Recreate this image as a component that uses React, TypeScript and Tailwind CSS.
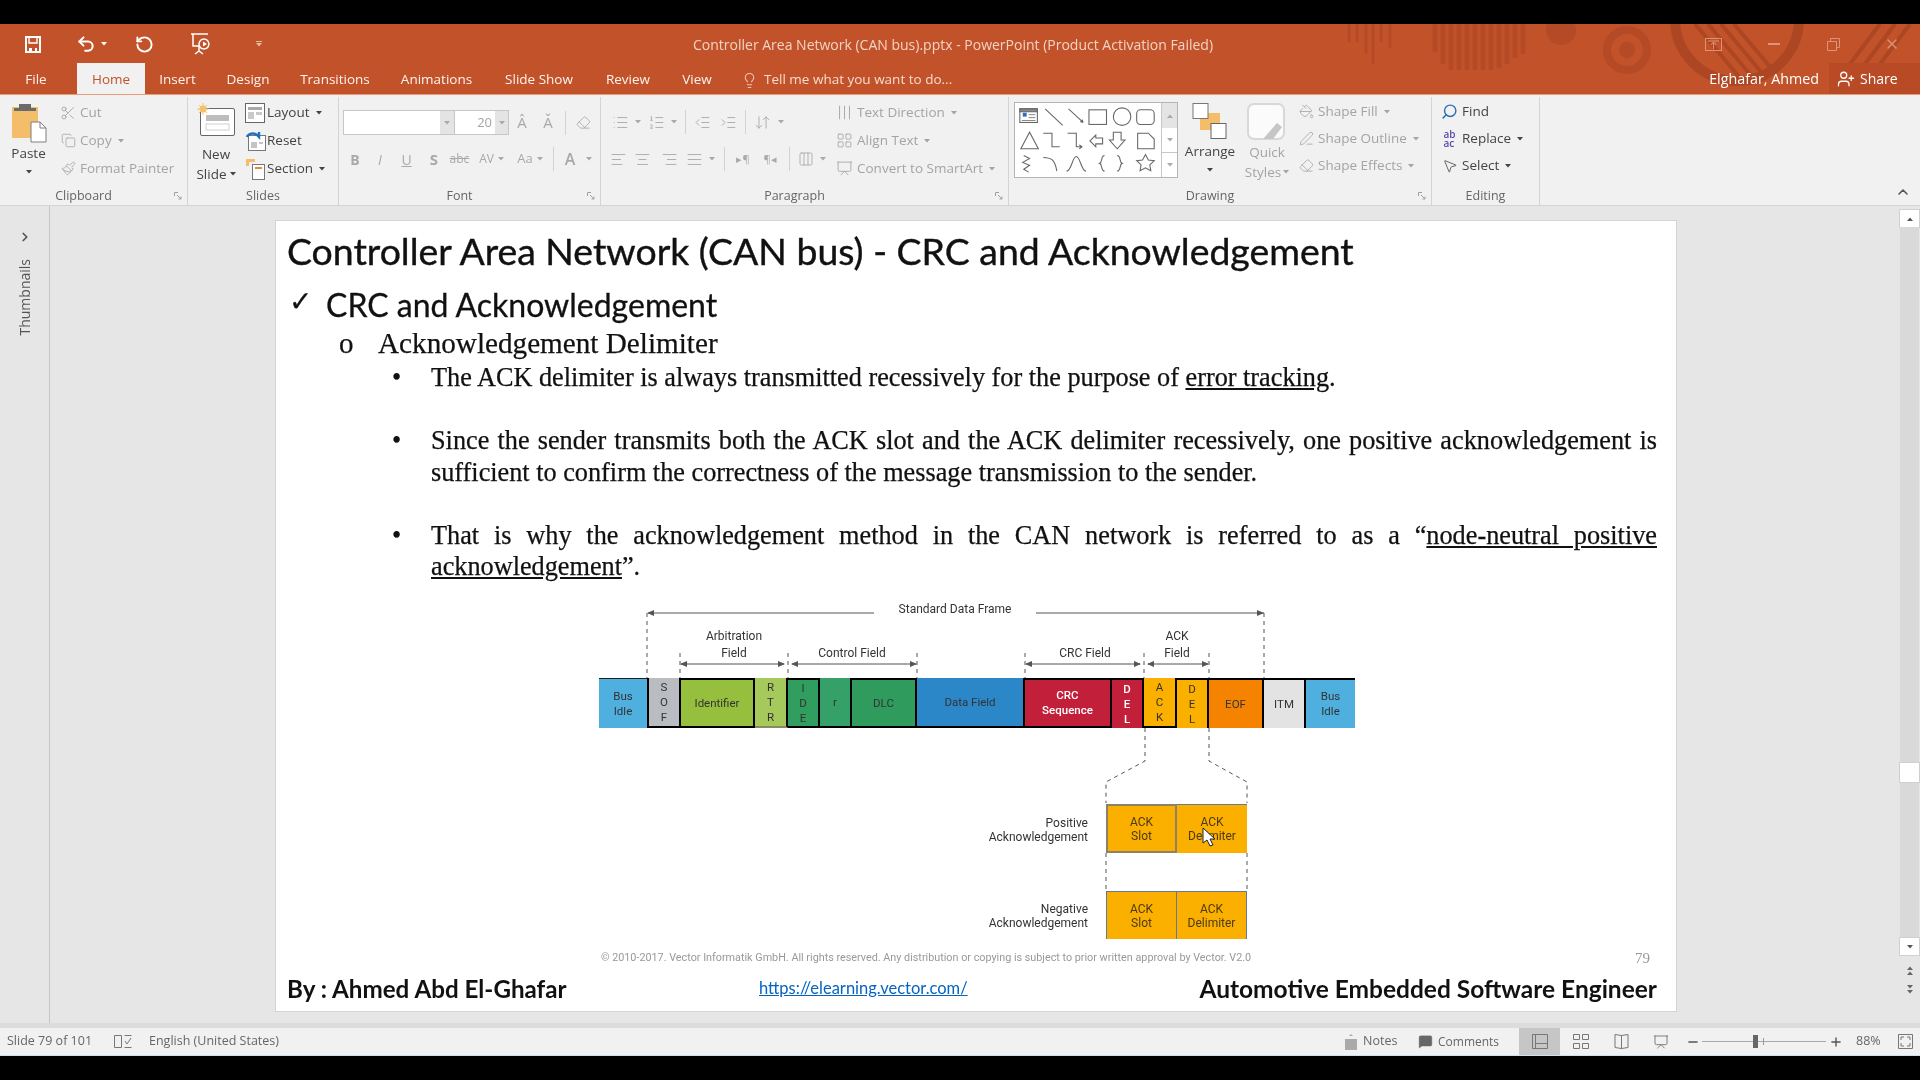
import type { ReactNode } from "react";
import {
  AlignCenter,
  AlignJustify,
  AlignLeft,
  AlignRight,
  ArrowDownUp,
  ChevronRight,
  ChevronUp,
  Columns3,
  Copy,
  Eraser,
  Indent,
  LayoutGrid,
  Lightbulb,
  List,
  ListOrdered,
  MessageSquare,
  Minus,
  MousePointer2,
  Outdent,
  PaintBucket,
  Paintbrush,
  PenLine,
  Plus,
  Presentation,
  RotateCw,
  Scissors,
  Search,
  Undo2,
  UserPlus,
  X,
} from "lucide-react";

const UI = "[font-family:'Open_Sans',sans-serif]";
const CALIBRI = "[font-family:'Lato',sans-serif]";
const TIMES = "[font-family:'Liberation_Serif',serif]";
const ROBOTO = "[font-family:'Roboto',sans-serif]";

const TABS = [
  { label: "File", w: "w-[77px] pr-[5px]" },
  { label: "Home", w: "w-[68px]", active: true },
  { label: "Insert", w: "w-[65px]" },
  { label: "Design", w: "w-[76px]" },
  { label: "Transitions", w: "w-[98px]" },
  { label: "Animations", w: "w-[105px]" },
  { label: "Slide Show", w: "w-[100px]" },
  { label: "Review", w: "w-[78px]" },
  { label: "View", w: "w-[60px]" },
];

const FRAME_CELLS = [
  { lines: ["Bus", "Idle"], cls: "w-[48px] bg-[#4fb0e0] border-t border-t-[#222]" },
  { lines: ["S", "O", "F"], cls: "w-[32px] bg-[#b9bcc0] border-l-2 border-b-2 border-black" },
  { lines: ["Identifier"], cls: "w-[76px] bg-[#96bf3e] border-2 border-black" },
  { lines: ["R", "T", "R"], cls: "w-[33px] bg-[#a6c95c] border-b-2 border-r-2 border-b-[#8a8a60] border-r-black" },
  { lines: ["I", "D", "E"], cls: "w-[32px] bg-[#2f9e5f] border-y-2 border-r-2 border-black" },
  { lines: ["r"], cls: "w-[32px] bg-[#35a068] border-b-2 border-r-2 border-black" },
  { lines: ["DLC"], cls: "w-[65px] bg-[#2f9c5d] border-y-2 border-r-2 border-black" },
  { lines: ["Data Field"], cls: "w-[108px] bg-[#2b87c8] border-b-2 border-r-2 border-black" },
  { lines: ["CRC", "Sequence"], cls: "w-[87px] bg-[#c21f3a] text-white font-medium border-y-2 border-r-2 border-black" },
  { lines: ["D", "E", "L"], cls: "w-[32px] bg-[#c21f3a] text-white font-medium border-t-2 border-r-2 border-black" },
  { lines: ["A", "C", "K"], cls: "w-[33px] bg-[#fbb000] border-b-2 border-r-2 border-black" },
  { lines: ["D", "E", "L"], cls: "w-[32px] bg-[#fbb000] border-t-2 border-r-2 border-black" },
  { lines: ["EOF"], cls: "w-[55px] bg-[#f58300] border-t-2 border-r-2 border-black" },
  { lines: ["ITM"], cls: "w-[42px] bg-[#e3e3e3] border-t-2 border-r-2 border-black" },
  { lines: ["Bus", "Idle"], cls: "w-[49px] bg-[#4fb0e0] border-t-2 border-black" },
];

function Caret({ className = "" }: { className?: string }) {
  return (
    <svg width="6" height="4" viewBox="0 0 6 4" className={`shrink-0 ${className}`}>
      <path d="M0 0h6L3 3.5z" fill="currentColor" />
    </svg>
  );
}

function Launcher() {
  return (
    <svg width="8" height="8" viewBox="0 0 8 8" className="absolute bottom-[5px] right-[5px] text-[#a0a0a0]">
      <path d="M.5 4V.5H4M3 3l4 4M7 4.5V7H4.5" fill="none" stroke="currentColor" />
    </svg>
  );
}

function Group({ label, width, launcher, children }: { label: string; width: string; launcher?: boolean; children: ReactNode }) {
  return (
    <div className={`relative flex h-[108px] shrink-0 flex-col border-r border-[#d4d4d4] ${width}`}>
      <div className="flex h-[92px]">{children}</div>
      <div className={`mt-[-1px] text-center text-[12.5px] leading-[18px] text-[#666] ${launcher ? "pr-[20px]" : ""}`}>{label}</div>
      {launcher && <Launcher />}
    </div>
  );
}

function Row({ icon, text, caret, off, tight, iconBox = "w-[22px]" }: { icon: ReactNode; text: string; caret?: boolean; off?: boolean; tight?: boolean; iconBox?: string }) {
  return (
    <div className={`flex items-center ${tight ? "h-[27px]" : "h-[28px]"} ${off ? "text-[#a4a4a4]" : "text-[#444]"}`}>
      <span className={`flex shrink-0 justify-center ${iconBox}`}>{icon}</span>
      <span className="ml-[1px] whitespace-nowrap text-[13.500px] leading-none">{text}</span>
      {caret && <Caret className="ml-[6px]" />}
    </div>
  );
}

function Cell({ className, children }: { className: string; children?: ReactNode }) {
  return <div className={`flex shrink-0 items-center justify-center text-[#a9a9a9] ${className}`}>{children}</div>;
}

function Sep({ h = "h-[24px]" }: { h?: string }) {
  return <span className={`block w-px bg-[#d2d2d2] ${h}`} />;
}

function SaveIcon() {
  return (
    <svg width="18" height="19" viewBox="0 0 18 19" fill="none" stroke="white" strokeWidth="2">
      <path d="M2 2h14v15H2z" />
      <path d="M5 2v6h8V2" strokeWidth="1.4" />
      <path d="M5 13h3v4H5zM11 13h2v4h-2z" fill="white" stroke="none" />
    </svg>
  );
}

function ProjectorIcon() {
  return (
    <svg width="24" height="24" viewBox="0 0 24 24" fill="none" stroke="white" strokeWidth="1.500">
      <path d="M1 2h17M3 2v12h10M9 14v5M5 22l4-3 4 3" />
      <path d="M14 7a5 5 0 1 1 -.1 0z" fill="#c2522a" />
      <path d="M13 9.500l4 2.500-4 2.500z" fill="white" stroke="none" />
    </svg>
  );
}

function PasteIcon() {
  return (
    <svg width="36" height="40" viewBox="0 0 36 40">
      <rect x="1" y="4" width="26" height="31" fill="#f3bd6a" />
      <rect x="8" y="1" width="12" height="6" fill="#6b6b6b" />
      <rect x="3" y="5" width="22" height="3" fill="#6b6b6b" />
      <path d="M20 19h9l6 6v14H20z" fill="#fff" stroke="#7f7f7f" />
      <path d="M29 19v6h6" fill="none" stroke="#7f7f7f" />
    </svg>
  );
}

function NewSlideIcon() {
  return (
    <svg width="38" height="34" viewBox="0 0 38 34">
      <rect x="3.5" y="5.5" width="34" height="27" rx="1.5" fill="#fff" stroke="#666" />
      <rect x="9" y="12" width="23" height="6" fill="#bdbdbd" />
      <rect x="9" y="21" width="23" height="6" fill="none" stroke="#d0d0d0" />
      <circle cx="6" cy="6" r="3.5" fill="#f3c26c" />
      <path d="M6 0v12M0 6h12M2 2l8 8M10 2l-8 8" stroke="#f3c26c" />
    </svg>
  );
}

function LayoutIcon() {
  return (
    <svg width="20" height="20" viewBox="0 0 20 20">
      <rect x=".5" y=".5" width="19" height="19" fill="#fff" stroke="#666" />
      <path d="M3 4h14v3H3z" fill="#a9a9a9" />
      <path d="M3 9h6v7H3zM11 9h6v3h-6z" fill="#c9c9c9" />
    </svg>
  );
}

function ResetIcon() {
  return (
    <svg width="21" height="20" viewBox="0 0 21 20">
      <rect x="3.5" y="4.5" width="17" height="15" fill="#fff" stroke="#777" />
      <path d="M6 11h6v6H6zM14 11h4v2h-4z" fill="#c4c4c4" />
      <path d="M2 6a6 5 0 0 1 10-2l2 2V1" fill="none" stroke="#1f6fc0" strokeWidth="2.4" />
    </svg>
  );
}

function SectionIcon() {
  return (
    <svg width="20" height="22" viewBox="0 0 20 22">
      <rect x="7.5" y="6.5" width="12" height="15" fill="#fff" stroke="#777" />
      <path d="M10 10h7" stroke="#e08a3c" strokeWidth="2" />
      <path d="M1 1h9v3H1z" fill="#f3bd6a" />
      <path d="M1 1v7h3V4" fill="#f3bd6a" />
    </svg>
  );
}

function ArrangeIcon() {
  return (
    <svg width="36" height="36" viewBox="0 0 36 36">
      <rect x="8" y="10" width="20" height="17" fill="#f3bd6a" />
      <rect x="1" y=".5" width="15" height="15" fill="#fff" stroke="#777" />
      <rect x="19" y="20.5" width="15" height="15" fill="#fff" stroke="#666" />
    </svg>
  );
}

function QuickStylesIcon() {
  return (
    <svg width="40" height="38" viewBox="0 0 40 38">
      <rect x="1" y="1" width="36" height="35" rx="6" fill="#fbfbfb" stroke="#d8d8d8" strokeWidth="2" />
      <path d="M16 36l14-16 5 4-9 12z" fill="#c6c6c6" />
    </svg>
  );
}

function ShapeGallery() {
  return (
    <svg width="146" height="74" viewBox="0 0 148 76" className="shrink-0" fill="none" stroke="#666" strokeWidth="1.1">
      <rect x="4" y="6" width="18" height="14" fill="#fff" />
      <path d="M4 6h18v3H4z" fill="#8a8a8a" />
      <path d="M7 10h4v4H7z" fill="#2a6fc0" stroke="none" />
      <path d="M13 12h7M13 15h7M6 18h14" strokeWidth=".8" />
      <path d="M30 6l18 17M54 6l15 14M69 20l-1-3M69 20l-3-1" />
      <rect x="75" y="7" width="18" height="15" />
      <circle cx="109" cy="14" r="9" />
      <rect x="124" y="7" width="18" height="15" rx="4" />
      <path d="M5 47l9-17 9 17z" />
      <path d="M28 31h9v14h8M53 31h9v14h6M68 45l-3-2M68 45l-3 2" />
      <path d="M76 39l6-6v3h7v6h-7v3z" />
      <path d="M100 30h8v8h4l-8 9-8-9h4z" />
      <path d="M125 47V31h11l6 6v10z" />
      <path d="M8 54l6 3-7 4 7 3-6 4 5 3" />
      <path d="M28 56c8 0 12 2 14 14M52 70c5 0 6-15 10-15s5 15 10 15" />
      <path d="M91 54c-4 0-2 7-5 8 3 1 1 8 5 8M104 54c4 0 2 7 5 8-3 1-1 8-5 8" />
      <path d="M133 53l3 5.500 6 .8-4.500 4.200 1 6-5.500-3-5.500 3 1-6-4.500-4.200 6-.8z" />
    </svg>
  );
}

function TitleDecor() {
  return (
    <svg className="pointer-events-none absolute left-[1340px] top-0 h-[71px] w-[580px]" viewBox="0 0 580 71" fill="none">
      <g stroke="#b54a26" strokeWidth="3">
        <path d="M9 0v18M17 0v18M26 0v30M33 0v40M41 0v18M50 0v24" />
        <path d="M95 0v28M103 0v40M111 0v46M119 0v46M127 0v46M135 0v46M143 0v46M151 0v46M159 0v44M167 0v40M175 0v34M183 0v30" strokeWidth="5" />
      </g>
      <circle cx="221" cy="6" r="15" fill="#b54a26" />
      <circle cx="287" cy="26" r="20" stroke="#b54a26" strokeWidth="8" />
      <circle cx="287" cy="26" r="8" fill="#b54a26" />
      <circle cx="397" cy="-5" r="62" stroke="#ad4723" strokeWidth="10" />
      <g stroke="#ad4723" strokeWidth="4">
        <path d="M355 0l50 60M368 0l50 60M381 0l46 55M394 0l42 50" />
        <path d="M510 60l45-60M525 60l45-60M495 60l45-60" />
      </g>
    </svg>
  );
}

function TitleBar() {
  return (
    <div className="relative z-10 flex h-[40px] shrink-0 items-center text-white">
      <div className="flex w-[693px] shrink-0 items-center">
        <span className="ml-[24px]"><SaveIcon /></span>
        <Undo2 size={20} strokeWidth={2.4} className="ml-[34px]" />
        <Caret className="ml-[5px]" />
        <RotateCw size={19} strokeWidth={2.4} className="ml-[28px] -scale-x-100" />
        <span className="ml-[36px]"><ProjectorIcon /></span>
        <span className="ml-[42px] flex flex-col items-center text-[#e8b9a3]">
          <span className="mb-[1px] block h-px w-[6px] bg-current" />
          <Caret />
        </span>
      </div>
      <span className="mt-[1px] whitespace-nowrap text-[14px] text-[#f3d3c4]">
        Controller Area Network (CAN bus).pptx - PowerPoint (Product Activation Failed)
      </span>
      <div className="ml-auto flex items-center text-[#dd9273]">
        <svg width="17" height="13" viewBox="0 0 17 13" fill="none" stroke="currentColor" className="mr-[46px]">
          <rect x=".5" y=".5" width="16" height="12" />
          <path d="M3 3h11M8.500 4v7M6 7l2.500-3L11 7" />
        </svg>
        <span className="mr-[47px] block h-[2px] w-[12px] bg-current" />
        <svg width="13" height="13" viewBox="0 0 13 13" fill="none" stroke="currentColor" className="mr-[44px]">
          <path d="M.5 3.500h9v9h-9zM3.500 3.500v-3h9v9h-3" />
        </svg>
        <X size={16} className="mr-[20px]" />
      </div>
    </div>
  );
}

function TabBar() {
  return (
    <div className="relative z-10 flex h-[31px] shrink-0 items-end border-b border-[#e99a78] text-white">
      {TABS.map((tab) => (
        <div
          key={tab.label}
          className={`flex h-[31px] items-center justify-center text-[13.500px] ${tab.w} ${tab.active ? "bg-[#f1f1f1] pt-[1px] text-[#c2522a]" : "pt-[2px] text-[#fdf3ee]"}`}
        >
          {tab.label}
        </div>
      ))}
      <Lightbulb size={17} strokeWidth={1.5} className="mb-[5px] ml-[14px] text-[#f0c7b4]" />
      <span className="mb-[5px] ml-[6px] whitespace-nowrap text-[13.500px] text-[#f6dccf]">Tell me what you want to do...</span>
      <span className="mb-[5px] ml-auto whitespace-nowrap text-[14.300px]">Elghafar, Ahmed</span>
      <div className="ml-[10px] flex h-[31px] w-[91px] items-center bg-[#b84a26] pl-[8px]">
        <UserPlus size={18} strokeWidth={1.7} />
        <span className="ml-[5px] text-[14px]">Share</span>
      </div>
    </div>
  );
}

function Ribbon() {
  return (
    <div className={`flex h-[110px] shrink-0 bg-[#f1f1f1] pt-[2px] ${UI}`}>
      <Group label="Clipboard" width="w-[188px]" launcher>
        <div className="flex w-[57px] shrink-0 flex-col items-center pt-[6px] text-[#444]">
          <PasteIcon />
          <span className="mt-[1px] text-[13.500px] leading-[18px]">Paste</span>
          <Caret className="mt-[8px]" />
        </div>
        <div className="pt-[1.500px]">
          <Row off icon={<Scissors size={16} strokeWidth={1.3} />} text="Cut" />
          <Row off icon={<Copy size={15} strokeWidth={1.3} />} text="Copy" caret />
          <Row off icon={<Paintbrush size={15} strokeWidth={1.3} />} text="Format Painter" />
        </div>
      </Group>

      <Group label="Slides" width="w-[151px]">
        <div className="flex w-[56px] shrink-0 flex-col items-center pt-[6px] text-[#444]">
          <NewSlideIcon />
          <span className="mt-[7px] text-[13.500px] leading-[20px]">New</span>
          <span className="flex items-center text-[13.500px] leading-[20px]">
            Slide
            <Caret className="ml-[3px]" />
          </span>
        </div>
        <div className="pt-[1.500px]">
          <Row icon={<LayoutIcon />} text="Layout" caret />
          <Row icon={<ResetIcon />} text="Reset" />
          <Row icon={<SectionIcon />} text="Section" caret />
        </div>
      </Group>

      <Group label="Font" width="w-[262px]" launcher>
        <div className="flex flex-col pl-[4px] pt-[13px]">
          <div className="flex h-[25px] items-center">
            <div className="flex h-[25px] w-[112px] justify-end border border-[#c6c6c6] bg-white">
              <Cell className="w-[14px] bg-[#e4e4e4]"><Caret /></Cell>
            </div>
            <div className="flex h-[25px] w-[54px] items-center justify-end border-y border-r border-[#c6c6c6] bg-white">
              <span className="text-[13px] text-[#a4a4a4]">20</span>
              <Cell className="ml-[3px] h-full w-[13px] bg-[#e4e4e4]"><Caret /></Cell>
            </div>
            <Cell className="w-[26px] text-[15px]">A&#770;</Cell>
            <Cell className="w-[26px] text-[15px]">A&#780;</Cell>
            <Cell className="w-[8px]"><Sep /></Cell>
            <Cell className="w-[28px]"><Eraser size={15} strokeWidth={1.4} /></Cell>
          </div>
          <div className="mt-[12px] flex h-[24px] items-center text-[#a9a9a9]">
            <Cell className="w-[24px] text-[14px] font-bold">B</Cell>
            <Cell className="w-[26px] text-[14px] italic">I</Cell>
            <Cell className="w-[27px] text-[14px] underline">U</Cell>
            <Cell className="w-[28px] text-[15px] font-bold">S</Cell>
            <Cell className="w-[23px] text-[12px] line-through">abc</Cell>
            <Cell className="w-[41px] gap-[4px] text-[12px]">AV<Caret /></Cell>
            <Cell className="w-[36px] gap-[4px] text-[13px]">Aa<Caret /></Cell>
            <Cell className="w-[10px]"><Sep /></Cell>
            <Cell className="w-[24px] text-[16px] font-semibold">A</Cell>
            <Cell className="w-[14px]"><Caret /></Cell>
          </div>
        </div>
      </Group>

      <Group label="Paragraph" width="w-[408px]" launcher>
        <div className="flex w-[232px] shrink-0 flex-col pt-[13px]">
          <div className="flex h-[24px] items-center">
            <Cell className="ml-[8px] w-[22px]"><List size={17} strokeWidth={1.3} /></Cell>
            <Cell className="w-[14px]"><Caret /></Cell>
            <Cell className="w-[22px]"><ListOrdered size={17} strokeWidth={1.3} /></Cell>
            <Cell className="w-[14px]"><Caret /></Cell>
            <Cell className="w-[8px]"><Sep /></Cell>
            <Cell className="w-[26px]"><Outdent size={17} strokeWidth={1.3} /></Cell>
            <Cell className="w-[26px]"><Indent size={17} strokeWidth={1.3} /></Cell>
            <Cell className="w-[8px]"><Sep /></Cell>
            <Cell className="w-[26px]"><ArrowDownUp size={17} strokeWidth={1.3} /></Cell>
            <Cell className="w-[12px]"><Caret /></Cell>
          </div>
          <div className="mt-[13px] flex h-[24px] items-center">
            <Cell className="ml-[6px] w-[22px]"><AlignLeft size={17} strokeWidth={1.3} /></Cell>
            <Cell className="w-[27px]"><AlignCenter size={17} strokeWidth={1.3} /></Cell>
            <Cell className="w-[26px]"><AlignRight size={17} strokeWidth={1.3} /></Cell>
            <Cell className="w-[24px]"><AlignJustify size={17} strokeWidth={1.3} /></Cell>
            <Cell className="w-[12px]"><Caret /></Cell>
            <Cell className="w-[12px]"><Sep /></Cell>
            <Cell className="w-[26px] text-[11px]">&#9656;&#182;</Cell>
            <Cell className="w-[28px] text-[11px]">&#182;&#9666;</Cell>
            <Cell className="w-[10px]"><Sep /></Cell>
            <Cell className="w-[24px]"><Columns3 size={16} strokeWidth={1.3} /></Cell>
            <Cell className="w-[10px]"><Caret /></Cell>
          </div>
        </div>
        <div className="pt-[1.500px]">
          <Row off iconBox="w-[23px]" icon={<AlignJustify size={17} strokeWidth={1.3} className="rotate-90" />} text="Text Direction" caret />
          <Row off iconBox="w-[23px]" icon={<LayoutGrid size={17} strokeWidth={1.2} />} text="Align Text" caret />
          <Row off iconBox="w-[23px]" icon={<Presentation size={17} strokeWidth={1.2} />} text="Convert to SmartArt" caret />
        </div>
      </Group>

      <Group label="Drawing" width="w-[423px]" launcher>
        <div className="ml-[5px] mt-[5px] flex h-[76px] w-[164px] shrink-0 border border-[#b4b4b4] bg-white">
          <ShapeGallery />
          <div className="flex w-[16px] shrink-0 flex-col border-l border-[#c6c6c6] text-[#666]">
            <Cell className="h-[25px] bg-[#e4e4e4]"><Caret className="rotate-180" /></Cell>
            <Cell className="h-[25px] border-b border-[#c6c6c6] text-[#555]"><Caret /></Cell>
            <Cell className="h-[24px] text-[#555]"><Caret /></Cell>
          </div>
        </div>
        <div className="flex w-[64px] shrink-0 flex-col items-center pt-[6px] text-[#444]">
          <ArrangeIcon />
          <span className="mt-[3px] text-[13.500px] leading-[18px]">Arrange</span>
          <Caret className="mt-[8px]" />
        </div>
        <div className="flex w-[50px] shrink-0 flex-col items-center pt-[6px] text-[#a4a4a4]">
          <QuickStylesIcon />
          <span className="mt-[2px] text-[13.500px] leading-[18px]">Quick</span>
          <span className="flex items-center text-[13.500px] leading-[22px]">Styles<Caret className="ml-[2px]" /></span>
        </div>
        <div className="ml-[3px] pt-[1px]">
          <Row off tight icon={<PaintBucket size={15} strokeWidth={1.3} />} text="Shape Fill" caret />
          <Row off tight icon={<PenLine size={15} strokeWidth={1.3} />} text="Shape Outline" caret />
          <Row off tight icon={<Eraser size={15} strokeWidth={1.3} />} text="Shape Effects" caret />
        </div>
      </Group>

      <Group label="Editing" width="w-[108px]">
        <div className="pl-[6px] pt-[1px]">
          <Row tight iconBox="w-[23px]" icon={<Search size={17} strokeWidth={2} className="-scale-x-100 text-[#2a6fb5]" />} text="Find" />
          <Row
            tight
            iconBox="w-[23px]"
            icon={
              <span className="text-[10px] font-semibold leading-[9px] text-[#5b4bb0]">
                ab
                <br />
                ac
              </span>
            }
            text="Replace"
            caret
          />
          <Row tight iconBox="w-[23px]" icon={<MousePointer2 size={16} strokeWidth={1.2} />} text="Select" caret />
        </div>
      </Group>

      <div className="flex flex-1 items-end justify-end pb-[5px] pr-[9px] text-[#555]">
        <ChevronUp size={16} strokeWidth={2.4} />
      </div>
    </div>
  );
}

function FrameDrawing() {
  const heads = [
    "M371 17l7-3v6z", "M988 17l-7-3v6z",
    "M404 68l7-3v6z", "M509 68l-7-3v6z", "M515 68l7-3v6z", "M641 68l-7-3v6z",
    "M749 68l7-3v6z", "M865 68l-7-3v6z", "M871 68l7-3v6z", "M933 68l-7-3v6z",
  ];
  return (
    <svg className="absolute left-0 top-0 h-[352px] w-[1400px]" viewBox="0 0 1400 352" fill="none">
      <g stroke="#555" strokeWidth="1">
        <path d="M372 17h226M760 17h228M405 68h103M516 68h124M750 68h114M872 68h60" />
      </g>
      <g stroke="#555" strokeWidth="1" strokeDasharray="4 4">
        <path d="M371 17v65M988 17v65M404 57v25M512 57v25M641 57v25M749 57v25M868 57v25M933 57v25" />
        <path d="M869 132v33l-39 21v21M933 132v33l38 21v21M830 257v38M971 257v38" />
      </g>
      <path d={heads.join("")} fill="#555" />
    </svg>
  );
}

function FieldLabel({ className, children }: { className: string; children: ReactNode }) {
  return <div className={`absolute -translate-x-1/2 whitespace-nowrap text-center text-[12px] leading-[17px] text-[#333] ${className}`}>{children}</div>;
}

function AckBox({ lines, className }: { lines: string[]; className: string }) {
  return (
    <div className={`flex flex-col items-center justify-center bg-[#fbb000] text-[12px] leading-[14px] text-[#4a3a10] ${className}`}>
      {lines.map((l) => <span key={l}>{l}</span>)}
    </div>
  );
}

function FrameDiagram() {
  return (
    <div className={`relative h-[352px] w-full ${ROBOTO}`}>
      <FrameDrawing />
      <FieldLabel className="left-[679px] top-[5px] bg-white px-1">Standard Data Frame</FieldLabel>
      <FieldLabel className="left-[458px] top-[32px]">Arbitration<br />Field</FieldLabel>
      <FieldLabel className="left-[576px] top-[49px]">Control Field</FieldLabel>
      <FieldLabel className="left-[809px] top-[49px]">CRC Field</FieldLabel>
      <FieldLabel className="left-[901px] top-[32px]">ACK<br />Field</FieldLabel>

      <div className="absolute left-[323px] top-[82px] flex h-[50px] text-[11.500px] text-[#333]">
        {FRAME_CELLS.map((cell, i) => (
          <div key={i} className={`flex flex-col items-center justify-center leading-[15px] ${cell.cls}`}>
            {cell.lines.map((l, j) => <span key={j}>{l}</span>)}
          </div>
        ))}
      </div>

      <div className="absolute right-[588px] top-[220px] text-right text-[12px] leading-[14px] text-[#333]">Positive<br />Acknowledgement</div>
      <div className="absolute left-[830px] top-[208px] flex h-[49px]">
        <AckBox lines={["ACK", "Slot"]} className="w-[71px] border-2 border-[#8c826a]" />
        <AckBox lines={["ACK", "Delimiter"]} className="w-[70px] border-t border-[#5f7a9a]" />
      </div>

      <div className="absolute right-[588px] top-[306px] text-right text-[12px] leading-[14px] text-[#333]">Negative<br />Acknowledgement</div>
      <div className="absolute left-[830px] top-[295px] flex h-[48px]">
        <AckBox lines={["ACK", "Slot"]} className="w-[71px] border-x border-t border-[#5f7a9a]" />
        <AckBox lines={["ACK", "Delimiter"]} className="w-[70px] border-r border-t border-[#5f7a9a]" />
      </div>

      <svg width="16" height="21" viewBox="0 0 16 21" className="absolute left-[926px] top-[231px]">
        <path d="M1 1v15l4-3 3 6 3-1-3-6h5z" fill="#fff" stroke="#222" strokeWidth="1" />
      </svg>
    </div>
  );
}

function Bullet({ children }: { children: ReactNode }) {
  return (
    <li className="mb-[31.500px] flex">
      <span className="w-[40px] shrink-0 pl-[1px]">&#8226;</span>
      <p className="w-[1226px] text-justify">{children}</p>
    </li>
  );
}

function Slide() {
  return (
    <div className="ml-[226px] mt-[15px] flex h-[790px] w-[1400px] shrink-0 flex-col bg-white text-[#111] shadow-[0_0_0_1px_#d4d4d4]">
      <h1 className={`flex h-[60px] shrink-0 items-center pl-[11px] text-[37.400px] [-webkit-text-stroke:0.4px_#111] ${CALIBRI}`}>
        Controller Area Network (CAN bus) - CRC and Acknowledgement
      </h1>
      <div className={`flex h-[48px] shrink-0 items-center pl-[13px] text-[32px] [-webkit-text-stroke:0.3px_#111] ${CALIBRI}`}>
        <span className="mb-[6px] w-[37px] [font-family:'DejaVu_Sans',sans-serif] text-[28px] leading-none">&#10003;</span>
        <span>CRC and Acknowledgement</span>
      </div>
      <div className={`flex h-[30px] shrink-0 items-center pl-[63px] text-[29.200px] [-webkit-text-stroke:0.25px_#111] ${TIMES}`}>
        <span className="w-[39px] text-[29px]">o</span>
        Acknowledgement Delimiter
      </div>
      <ul className={`ml-[115px] mt-[3px] h-[234px] shrink-0 text-[26.250px] leading-[31.500px] [-webkit-text-stroke:0.25px_#111] ${TIMES}`}>
        <Bullet>
          The ACK delimiter is always transmitted recessively for the purpose of <span className="underline">error tracking</span>.
        </Bullet>
        <Bullet>
          Since the sender transmits both the ACK slot and the ACK delimiter recessively, one positive acknowledgement is sufficient to confirm the correctness of the message transmission to the sender.
        </Bullet>
        <Bullet>
          That is why the acknowledgement method in the CAN network is referred to as a &#8220;<span className="underline">node-neutral positive acknowledgement</span>&#8221;.
        </Bullet>
      </ul>
      <FrameDiagram />
      <div className={`flex h-[20px] shrink-0 items-center pl-[325px] pr-[26px] text-[#999] ${ROBOTO}`}>
        <span className="text-[10.800px]">&#169; 2010-2017. Vector Informatik GmbH. All rights reserved. Any distribution or copying is subject to prior written approval by Vector. V2.0</span>
        <span className={`ml-auto text-[15px] ${TIMES}`}>79</span>
      </div>
      <div className={`flex h-[41px] shrink-0 items-center pl-[11px] pr-[19px] pt-[1px] ${CALIBRI}`}>
        <span className="w-[472px] text-[24.200px] font-bold">By : Ahmed Abd El-Ghafar</span>
        <span className="mb-[2px] text-[16.500px] text-[#0563c1] underline">https://elearning.vector.com/</span>
        <span className="ml-auto text-[24.500px] font-bold">Automotive Embedded Software Engineer</span>
      </div>
    </div>
  );
}

function ScrollButton({ flip, className = "" }: { flip?: boolean; className?: string }) {
  return (
    <div className={`flex h-[17px] items-center justify-center bg-white text-[#555] shadow-[0_0_0_1px_#d0d0d0] ${className}`}>
      <Caret className={flip ? "rotate-180" : ""} />
    </div>
  );
}

function ScrollBar() {
  return (
    <div className="ml-auto mr-[1px] flex w-[19px] shrink-0 flex-col pt-[4px]">
      <ScrollButton flip />
      <div className="h-[711px] bg-[#d9d9d9] pt-[536px]">
        <div className="h-[19px] bg-white shadow-[0_0_0_1px_#cfcfcf]" />
      </div>
      <ScrollButton />
      <div className="mt-[11px] flex flex-col items-center text-[#666]">
        <Caret className="rotate-180" />
        <Caret className="mt-[1px] rotate-180" />
        <Caret className="mt-[10px]" />
        <Caret className="mt-[1px]" />
      </div>
    </div>
  );
}

function StatusBar() {
  return (
    <div className={`flex h-[27px] shrink-0 items-center bg-[#f1f1f1] text-[12.500px] text-[#666] ${UI}`}>
      <span className="ml-[7px] w-[107px]">Slide 79 of 101</span>
      <svg width="18" height="15" viewBox="0 0 18 15" fill="none" stroke="#777">
        <path d="M.5 1.500h7v12h-7zM10.500 13.500h7M10.500 1.500h7M11 7l2 3 4-6" />
      </svg>
      <span className="ml-[17px]">English (United States)</span>
      <div className="ml-auto flex h-full items-center">
        <svg width="14" height="16" viewBox="0 0 14 16" className="text-[#aaa]">
          <path d="M5 2l2-2 2 2zM1 5h12v11H1z" fill="currentColor" />
        </svg>
        <span className="ml-[5px] w-[55px]">Notes</span>
        <MessageSquare size={15} fill="#666" strokeWidth={1} />
        <span className="ml-[5px] w-[81px] text-[12px]">Comments</span>
        <Cell className="h-full w-[41px] bg-[#c6c6c6]">
          <svg width="16" height="15" viewBox="0 0 16 15" fill="none" stroke="#777"><path d="M.5.500h15v14H.5zM3.500.500v14M3.500 9.500h12" /></svg>
        </Cell>
        <Cell className="h-full w-[41px]">
          <svg width="16" height="15" viewBox="0 0 16 15" fill="none" stroke="#777"><path d="M.5.500h6v5h-6zM9.500.500h6v5h-6zM.5 9.500h6v5h-6zM9.500 9.500h6v5h-6z" /></svg>
        </Cell>
        <Cell className="h-full w-[41px]">
          <svg width="15" height="15" viewBox="0 0 15 15" fill="none" stroke="#777"><path d="M7.500 1.500L1 .5v13l6.500 1zM7.500 1.500L14 .5v13l-6.500 1z" /></svg>
        </Cell>
        <Cell className="h-full w-[38px]">
          <Presentation size={16} strokeWidth={1.4} className="text-[#777]" />
        </Cell>
        <Minus size={14} strokeWidth={2.4} className="ml-[6px] text-[#555]" />
        <div className="relative ml-[2px] h-px w-[124px] bg-[#a8a8a8]">
          <span className="absolute left-[51px] top-[-6px] h-[13px] w-[5px] bg-[#666]" />
          <span className="absolute left-[61px] top-[-3px] h-[7px] w-px bg-[#999]" />
        </div>
        <Plus size={14} strokeWidth={2.4} className="ml-[3px] text-[#555]" />
        <span className="ml-[13px] w-[40px] text-[#666]">88%</span>
        <svg width="15" height="15" viewBox="0 0 15 15" fill="none" stroke="#777" className="ml-[2px] mr-[7px]">
          <path d="M.5.500h14v14H.5zM3 3h3M3 3v3M12 3H9M12 3v3M3 12h3M3 12V9M12 12H9M12 12V9" />
        </svg>
      </div>
    </div>
  );
}

export default function App() {
  return (
    <div className={`flex h-[1080px] w-[1920px] flex-col overflow-hidden bg-black pt-[24px] blur-[0.5px] ${UI}`}>
      <div className="relative flex h-[71px] shrink-0 flex-col bg-[#c2522a]">
        <TitleDecor />
        <TitleBar />
        <TabBar />
      </div>
      <Ribbon />
      <div className="flex h-[818px] shrink-0 border-t border-[#d4d4d4] bg-[#e6e6e6]">
        <div className="flex w-[50px] shrink-0 flex-col items-center border-r border-[#c6c6c6] text-[#555]">
          <ChevronRight size={14} strokeWidth={3} className="mt-[24px]" />
          <span className="mt-[15px] rotate-180 text-[14px] [writing-mode:vertical-rl]">Thumbnails</span>
        </div>
        <Slide />
        <ScrollBar />
      </div>
      <div className="h-[5px] shrink-0 bg-[#dcdcdc]" />
      <StatusBar />
      <div className="h-px shrink-0 bg-[#cfe0f2]" />
    </div>
  );
}
